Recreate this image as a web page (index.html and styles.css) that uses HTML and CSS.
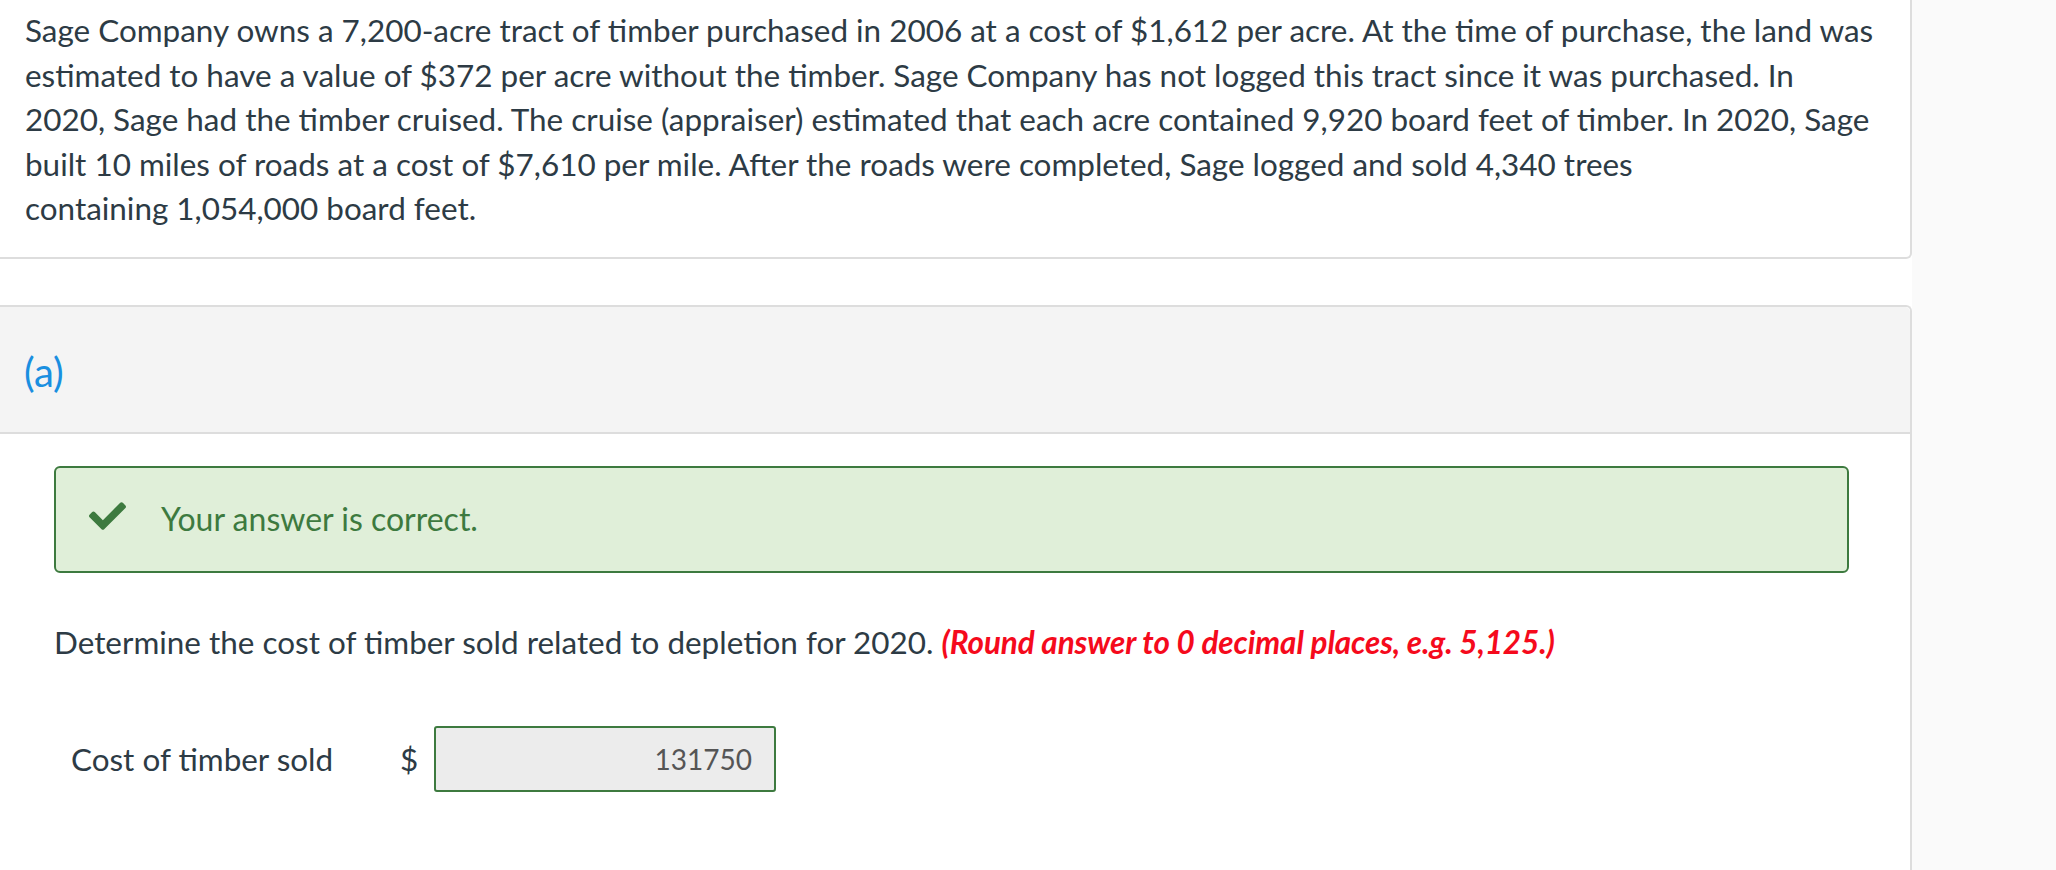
FILE: index.html
```html
<!DOCTYPE html>
<html lang="en">
<head>
<meta charset="utf-8">
<title>Question</title>
<link rel="stylesheet" href="styles.css">
</head>
<body>
<div class="page">
  <main class="main">
    <section class="card stem">
      <p>Sage Company owns a 7,200-acre tract of timber purchased in 2006 at a cost of $1,612 per acre. At the time of purchase, the land was estimated to have a value of $372 per acre without the timber. Sage Company has not logged this tract since it was purchased. In 2020, Sage had the timber cruised. The cruise (appraiser) estimated that each acre contained 9,920 board feet of timber. In 2020, Sage built 10 miles of roads at a cost of $7,610 per mile. After the roads were completed, Sage logged and sold 4,340 trees<br>containing 1,054,000 board feet.</p>
    </section>
    <section class="part">
      <header class="part-head"><span class="part-label">(a)</span></header>
      <div class="part-body">
        <div class="feedback">
          <svg class="check" viewBox="0 65 512 381" width="37" height="28" aria-hidden="true"><path fill="#3d7a3f" d="M173.898 439.404l-166.4-166.4c-9.997-9.997-9.997-26.206 0-36.204l36.203-36.204c9.997-9.998 26.207-9.998 36.204 0L192 312.69 432.095 72.596c9.997-9.997 26.207-9.997 36.204 0l36.203 36.204c9.997 9.997 9.997 26.206 0 36.204l-294.4 294.401c-9.998 9.997-26.207 9.997-36.204-.001z"/></svg>
          <span class="feedback-text">Your answer is correct.</span>
        </div>
        <p class="prompt">Determine the cost of timber sold related to depletion for 2020. <em class="hint">(Round answer to 0 decimal places, e.g. 5,125.)</em></p>
        <div class="answer-row">
          <span class="answer-label">Cost of timber sold</span>
          <span class="currency">$</span>
          <div class="answer-box">131750</div>
        </div>
      </div>
    </section>
  </main>
  <aside class="side"></aside>
</div>
</body>
</html>
```
FILE: styles.css
```css
html, body {
  margin: 0;
  padding: 0;
}
body {
  background: #fafafa;
  font-family: "Lato", "Liberation Sans", sans-serif;
  color: #2d3b45;
  font-size: 31.45px;
  line-height: 44.5px;
  overflow: hidden;
}
.page {
  display: flex;
  height: 870px;
}
.main {
  width: 1912px;
  flex: none;
  background: #ffffff;
  display: flex;
  flex-direction: column;
}
.side {
  flex: 1;
  background: #fafafa;
}
.card {
  box-sizing: border-box;
  padding: 8px 30px 26px 25px;
  border-right: 2px solid #dddddd;
  border-bottom: 2px solid #dddddd;
  border-bottom-right-radius: 6px;
}
.card p {
  margin: 0;
}
.part {
  flex: 1;
  margin-top: 46px;
  border-top: 2px solid #dddddd;
  border-right: 2px solid #dddddd;
  border-top-right-radius: 6px;
}
.part-head {
  background: #f4f4f4;
  height: 125px;
  border-bottom: 2px solid #dddddd;
  border-top-right-radius: 5px;
  display: flex;
  align-items: center;
  padding-left: 24px;
}
.part-label {
  color: #1a8fe0;
  font-size: 40px;
  line-height: 44px;
  margin-top: 6px;
}
.part-body {
  padding: 32px 61px 0 54px;
}
.feedback {
  box-sizing: border-box;
  height: 107px;
  border: 2px solid #3d7a3f;
  border-radius: 6px;
  background: #e0efd9;
  display: flex;
  align-items: center;
  padding-left: 33px;
  gap: 35px;
}
.check {
  display: block;
  margin-top: -6px;
}
.feedback-text {
  color: #3d7a3f;
  font-size: 32px;
}
.prompt {
  margin: 47px 0 0 0;
}
.hint {
  color: #f50a1c;
  font-weight: 700;
  font-style: italic;
  letter-spacing: -0.1px;
}
.answer-row {
  display: flex;
  align-items: center;
  margin-top: 62px;
  padding-left: 17px;
}
.answer-label {
  width: 329px;
  flex: none;
}
.currency {
  width: 34px;
  flex: none;
}
.answer-box {
  box-sizing: border-box;
  width: 342px;
  height: 66px;
  border: 2px solid #3d7a3f;
  border-radius: 3px;
  background: #ececec;
  color: #555555;
  text-align: right;
  padding-right: 22px;
  line-height: 62px;
  font-size: 28px;
}
```
